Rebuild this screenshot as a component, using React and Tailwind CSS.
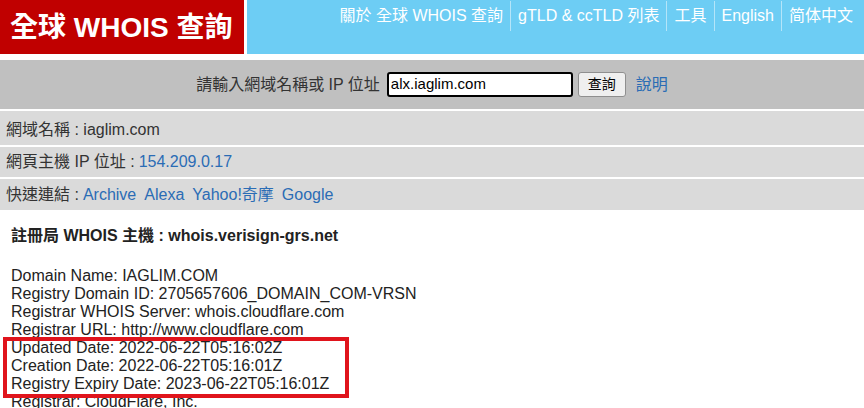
import React from "react";

const font = { fontFamily: '"Liberation Sans", Arial, "Noto Sans CJK TC", sans-serif' };

export default function App() {
  const nav = ["關於 全球 WHOIS 查詢", "gTLD & ccTLD 列表", "工具", "English", "简体中文"];
  const lines = [
    "Domain Name: IAGLIM.COM",
    "Registry Domain ID: 2705657606_DOMAIN_COM-VRSN",
    "Registrar WHOIS Server: whois.cloudflare.com",
    "Registrar URL: http://www.cloudflare.com",
  ];
  const boxed = [
    "Updated Date: 2022-06-22T05:16:02Z",
    "Creation Date: 2022-06-22T05:16:01Z",
    "Registry Expiry Date: 2023-06-22T05:16:01Z",
  ];
  return (
    <div className="w-[864px] h-[408px] overflow-hidden bg-white text-[#222]" style={font}>
      <div className="flex h-[54px] gap-[3px]">
        <div className="w-[244px] bg-[#c00000] flex items-center pl-[10px] pt-[2px]">
          <span className="text-white font-bold text-[28px] leading-none whitespace-nowrap">全球 WHOIS 查詢</span>
        </div>
        <div className="flex-1 bg-[#6dcdf4] flex justify-end items-start pr-[4px]">
          {nav.map((n, i) => (
            <div
              key={n}
              className={`text-white text-[16px] leading-[30px] px-[7px] mt-[1px] whitespace-nowrap ${i > 0 ? "border-l border-[#b4e5f9]" : ""}`}
            >
              {n}
            </div>
          ))}
        </div>
      </div>
      <div className="mt-[6px] h-[49px] bg-[#c0c0c0] flex items-center justify-center text-[16px] text-[#333]">
        <span className="mr-[7px]">請輸入網域名稱或 IP 位址</span>
        <div className="w-[186px] h-[25px] border-2 border-black rounded-[3px] bg-white flex items-center pl-[2px] text-[15px] text-black">
          alx.iaglim.com
        </div>
        <div className="ml-[5px] w-[48px] h-[25px] border border-[#8f8f8f] rounded-[3px] bg-[#efefef] flex items-center justify-center text-[14px] text-black">
          查詢
        </div>
        <span className="ml-[10px] text-[#2a6cb5]">說明</span>
      </div>
      <div className="mt-[2px] h-[34px] bg-[#dadada] flex items-center pl-[6px] pt-[3px] text-[16px] text-[#333]">
        網域名稱 : iaglim.com
      </div>
      <div className="mt-[2px] h-[30px] bg-[#dadada] flex items-center pl-[6px] text-[16px] text-[#333]">
        網頁主機 IP 位址 : <span className="ml-[4px] text-[#2a6cb5]">154.209.0.17</span>
      </div>
      <div className="mt-[2px] h-[31px] bg-[#dadada] flex items-center pl-[6px] text-[16px] text-[#333]">
        快速連結 :
        <span className="ml-[4px] text-[#2a6cb5]">Archive</span>
        <span className="ml-[8px] text-[#2a6cb5]">Alexa</span>
        <span className="ml-[8px] text-[#2a6cb5]">Yahoo!奇摩</span>
        <span className="ml-[8px] text-[#2a6cb5]">Google</span>
      </div>
      <div className="pl-[11px] pt-[17px] text-[16px] text-[#222]">
        <div className="font-bold leading-[18px]">註冊局 WHOIS 主機 : whois.verisign-grs.net</div>
        <div className="mt-[22px] leading-[18px]">
          {lines.map((l) => (
            <div key={l}>{l}</div>
          ))}
          <div className="relative">
            {boxed.map((l) => (
              <div key={l}>{l}</div>
            ))}
            <div className="absolute left-[-8px] top-[-2px] w-[346px] h-[61px] border-[4px] border-[#e0141c]"></div>
          </div>
          <div>Registrar: CloudFlare, Inc.</div>
        </div>
      </div>
    </div>
  );
}
